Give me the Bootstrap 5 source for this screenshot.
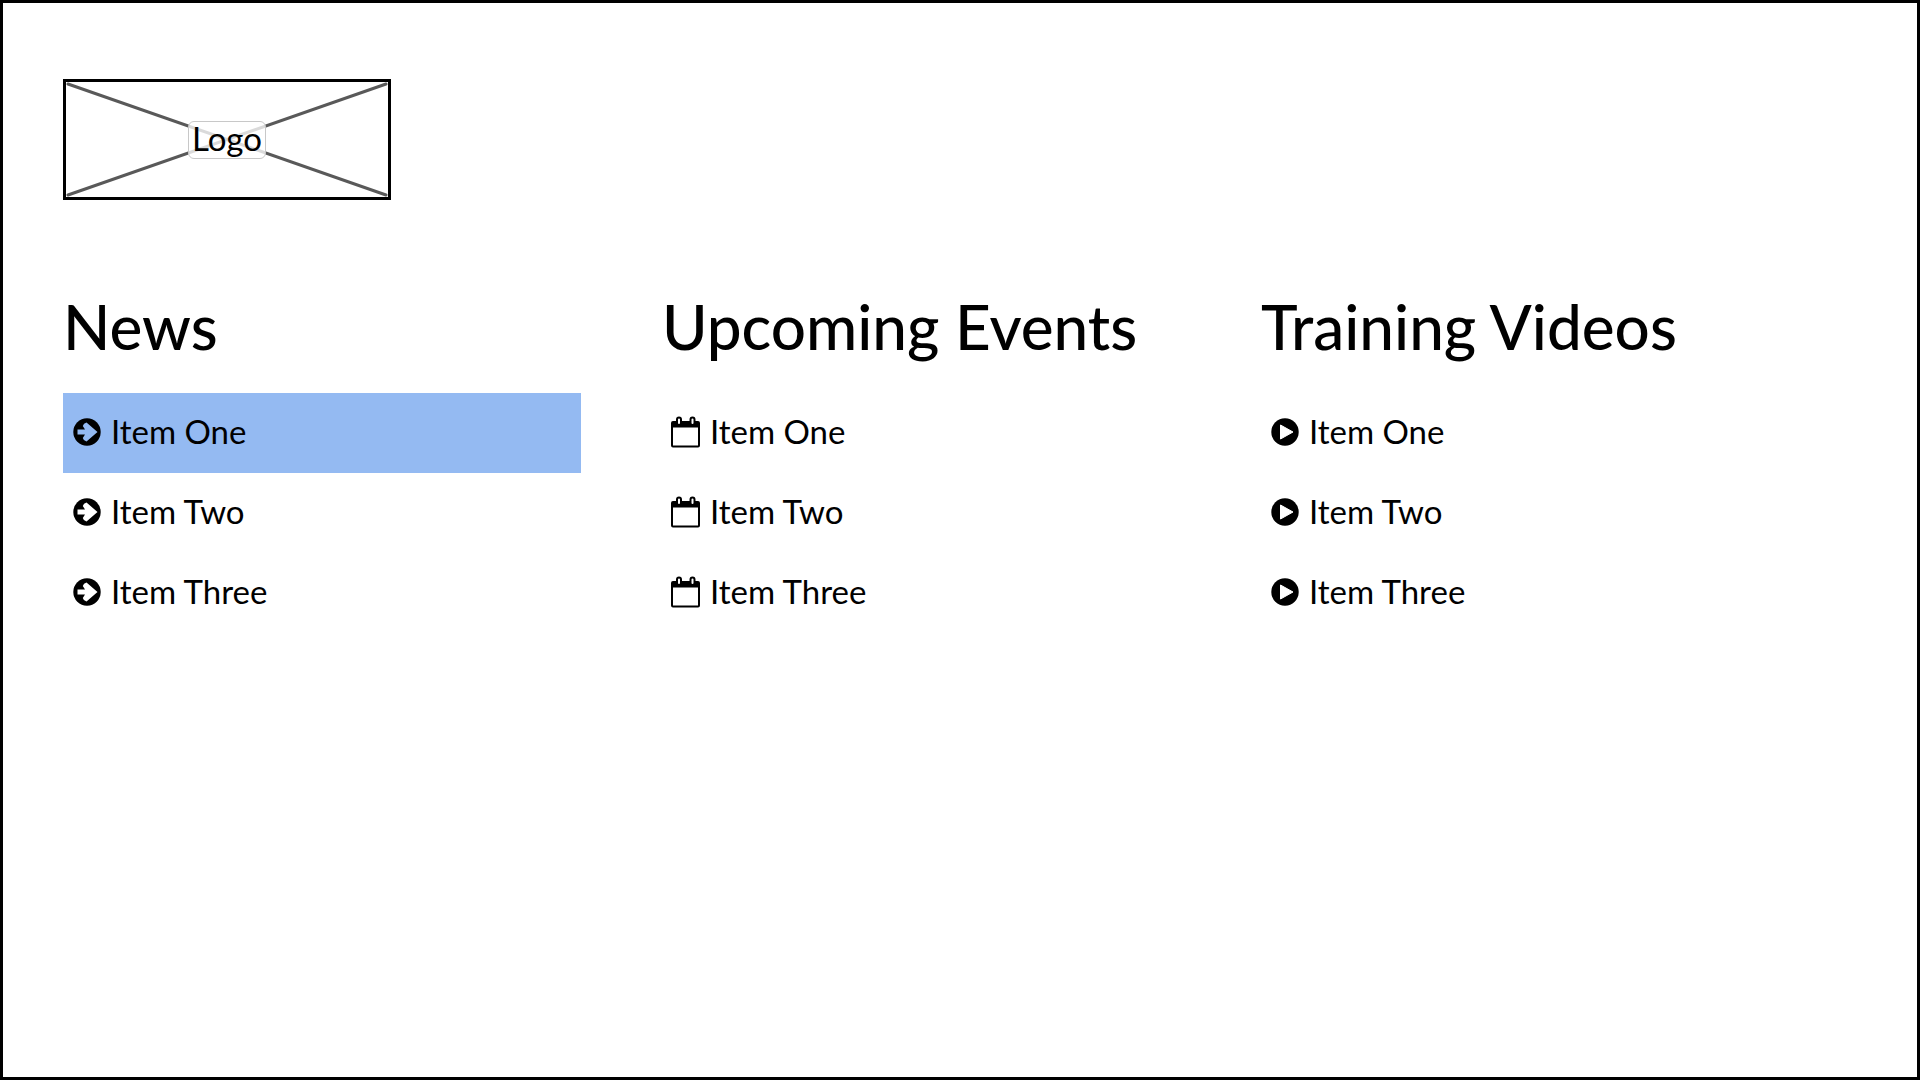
<!DOCTYPE html>
<html lang="en">
<head>
<meta charset="utf-8">
<meta name="viewport" content="width=device-width, initial-scale=1">
<title>News, Events and Videos</title>
<link href="https://cdn.jsdelivr.net/npm/bootstrap@5.3.0/dist/css/bootstrap.min.css" rel="stylesheet">
<style>
  body { font-family: Lato, "Open Sans", sans-serif; color: #000; background: #fff; }
  .page-frame { border: 3px solid #000; padding: 76px 57px 40px 60px; }
  .brand-box { width: 328px; height: 121px; border: 3px solid #000; }
  .brand-box svg { inset: 0; }
  .brand-label { font-size: 33px; line-height: 32px; padding: 0 3px 4px; border: 1px solid #c8c8c8; border-radius: 6px; background: rgba(255, 255, 255, .78); }
  .boards { margin-top: 92px; }
  .board-title { font-size: 62px; line-height: 68px; font-weight: 500; margin-bottom: 33px; }
  .board-list { width: 86.5%; }
  .board-link { height: 80px; padding: 0 8px 2px; gap: 8px; font-size: 33px; line-height: 40px; color: #000; --hole: #fff; }
  .board-link.active { background: #94baf2; --hole: #94baf2; }
  .board-link svg { width: 32px; height: 32px; flex: none; }
  .board-link span { padding-bottom: 2px; }
</style>
<script src="https://cdn.jsdelivr.net/npm/bootstrap@5.3.0/dist/js/bootstrap.bundle.min.js" defer></script>
</head>
<body>
<svg class="d-none" aria-hidden="true">
  <symbol id="arrow" viewBox="0 0 32 32">
    <circle cx="16" cy="16" r="13.700"/>
    <path d="M6.500 13.500H14l-2.200-3.500q.7-3 3.700-3.500L26.500 16 15.500 25.500q-3-.5-3.700-3.500L14 18.500H6.500z" fill="var(--hole)"/>
  </symbol>
  <symbol id="calendar" viewBox="0 0 32 32">
    <path d="M3 5h25a2 2 0 0 1 2 2v22.500a2 2 0 0 1-2 2H3a2 2 0 0 1-2-2V7a2 2 0 0 1 2-2zm0 6.500v18h25v-18z" fill-rule="evenodd"/>
    <rect x="7" y="1.500" width="4" height="7.500" rx="2" fill="#fff" stroke="#000" stroke-width="2"/>
    <rect x="20.500" y="1.500" width="4" height="7.500" rx="2" fill="#fff" stroke="#000" stroke-width="2"/>
  </symbol>
  <symbol id="play" viewBox="0 0 32 32">
    <circle cx="16" cy="16" r="13.700"/>
    <path d="M11.500 9v14L24 16z" fill="#fff" stroke="#fff" stroke-linejoin="round"/>
  </symbol>
</svg>
<div class="page-frame min-vh-100">
  <header>
    <div class="brand-box position-relative d-flex align-items-center justify-content-center">
      <svg class="position-absolute w-100 h-100" viewBox="0 0 322 115" preserveAspectRatio="none" stroke="#595959" stroke-width="3" stroke-linecap="round" aria-hidden="true"><path d="M2 2 320 113M320 2 2 113"/></svg>
      <span class="brand-label position-relative">Logo</span>
    </div>
  </header>
  <main class="boards row gx-0">
    <section class="col-4">
      <h2 class="board-title">News</h2>
      <ul class="board-list list-unstyled mb-0">
        <li><a href="#" class="board-link active d-flex align-items-center text-decoration-none"><svg aria-hidden="true"><use href="#arrow"/></svg><span>Item One</span></a></li>
        <li><a href="#" class="board-link d-flex align-items-center text-decoration-none"><svg aria-hidden="true"><use href="#arrow"/></svg><span>Item Two</span></a></li>
        <li><a href="#" class="board-link d-flex align-items-center text-decoration-none"><svg aria-hidden="true"><use href="#arrow"/></svg><span>Item Three</span></a></li>
      </ul>
    </section>
    <section class="col-4">
      <h2 class="board-title">Upcoming Events</h2>
      <ul class="board-list list-unstyled mb-0">
        <li><a href="#" class="board-link d-flex align-items-center text-decoration-none"><svg aria-hidden="true"><use href="#calendar"/></svg><span>Item One</span></a></li>
        <li><a href="#" class="board-link d-flex align-items-center text-decoration-none"><svg aria-hidden="true"><use href="#calendar"/></svg><span>Item Two</span></a></li>
        <li><a href="#" class="board-link d-flex align-items-center text-decoration-none"><svg aria-hidden="true"><use href="#calendar"/></svg><span>Item Three</span></a></li>
      </ul>
    </section>
    <section class="col-4">
      <h2 class="board-title">Training Videos</h2>
      <ul class="board-list list-unstyled mb-0">
        <li><a href="#" class="board-link d-flex align-items-center text-decoration-none"><svg aria-hidden="true"><use href="#play"/></svg><span>Item One</span></a></li>
        <li><a href="#" class="board-link d-flex align-items-center text-decoration-none"><svg aria-hidden="true"><use href="#play"/></svg><span>Item Two</span></a></li>
        <li><a href="#" class="board-link d-flex align-items-center text-decoration-none"><svg aria-hidden="true"><use href="#play"/></svg><span>Item Three</span></a></li>
      </ul>
    </section>
  </main>
</div>
</body>
</html>
